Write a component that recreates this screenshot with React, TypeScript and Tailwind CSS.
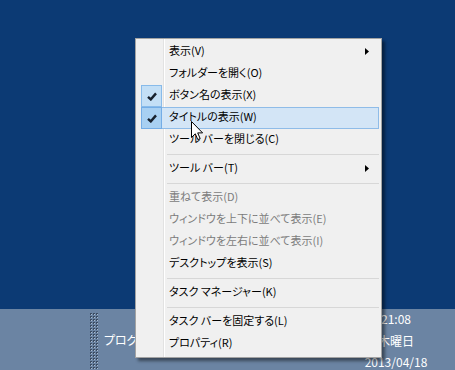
import React from 'react';

type Item =
  | { kind: 'sep' }
  | {
      kind: 'item';
      label: string;
      checked?: boolean;
      hover?: boolean;
      disabled?: boolean;
      submenu?: boolean;
    };

const ITEMS: Item[] = [
  { kind: 'item', label: '表示(V)', submenu: true },
  { kind: 'item', label: 'フォルダーを開く(O)' },
  { kind: 'item', label: 'ボタン名の表示(X)', checked: true },
  { kind: 'item', label: 'タイトルの表示(W)', checked: true, hover: true },
  { kind: 'item', label: 'ツール バーを閉じる(C)' },
  { kind: 'sep' },
  { kind: 'item', label: 'ツール バー(T)', submenu: true },
  { kind: 'sep' },
  { kind: 'item', label: '重ねて表示(D)', disabled: true },
  { kind: 'item', label: 'ウィンドウを上下に並べて表示(E)', disabled: true },
  { kind: 'item', label: 'ウィンドウを左右に並べて表示(I)', disabled: true },
  { kind: 'item', label: 'デスクトップを表示(S)' },
  { kind: 'sep' },
  { kind: 'item', label: 'タスク マネージャー(K)' },
  { kind: 'sep' },
  { kind: 'item', label: 'タスク バーを固定する(L)' },
  { kind: 'item', label: 'プロパティ(R)' },
];

const FONT = "font-['Meiryo_UI','Noto_Sans_CJK_JP',sans-serif] [font-feature-settings:'palt']";

function Check() {
  return (
    <svg width="10" height="9" viewBox="0 0 10 9">
      <path d="M1 4.8 L3.8 7.4 L9 1.4" fill="none" stroke="#17212e" strokeWidth="2.4" />
    </svg>
  );
}

function Arrow() {
  return (
    <svg width="4" height="7" viewBox="0 0 4 7">
      <path d="M0 0 L4 3.5 L0 7 Z" fill="#000" />
    </svg>
  );
}

function MenuRow({ item }: { item: Item }) {
  if (item.kind === 'sep') {
    return (
      <div className="h-[7px] pl-[31px] pr-[2px] pt-[3px]">
        <div className="h-px bg-[#d7d7d7]" />
      </div>
    );
  }
  return (
    <div
      className={
        'ml-[5px] mr-[2px] h-[22px] flex items-center border ' +
        (item.hover ? 'bg-[#d3e5f6] border-[#8fbce8]' : 'border-transparent')
      }
    >
      <div className="w-[21px] h-[22px] -my-px -ml-px flex items-center justify-center">
        {item.checked && (
          <div
            className={
              'w-[22px] h-[22px] flex items-center justify-center border ' +
              (item.hover ? 'bg-[#a8d0f2] border-[#74ade6]' : 'bg-[#c3dff6] border-[#88bbea]')
            }
          >
            <Check />
          </div>
        )}
      </div>
      <span
        className={
          'ml-[7px] flex-1 text-[11px] leading-none -mt-[3px] ' +
          (item.disabled ? 'text-[#7c7c7c]' : 'text-black')
        }
      >
        {item.label}
      </span>
      {item.submenu && (
        <span className="mr-[9px] -mt-[2px] flex">
          <Arrow />
        </span>
      )}
    </div>
  );
}

function Cursor() {
  return (
    <svg className="absolute left-[191px] top-[121px]" width="13" height="21" viewBox="0 0 13 21">
      <path
        d="M0.5 0.5 L0.5 16.5 L4.3 12.8 L6.8 18.6 L9.2 17.6 L6.7 11.9 L11.6 11.9 Z"
        fill="#fff"
        stroke="#000"
        strokeWidth="1"
      />
    </svg>
  );
}

function Gripper() {
  const dots = [];
  for (let r = 0; r < 19; r++) {
    for (let c = 0; c < 3; c++) {
      dots.push(<rect key={`d${r}-${c}`} x={c * 3} y={r * 3} width="2" height="2" fill="#3b4c62" />);
      dots.push(<rect key={`l${r}-${c}`} x={c * 3 + 1} y={r * 3 + 1} width="1" height="1" fill="#a9bbd0" />);
    }
  }
  return (
    <svg width="9" height="57" viewBox="0 0 9 57" className="shrink-0">
      {dots}
    </svg>
  );
}

export default function App() {
  return (
    <div className={`relative w-[455px] h-[370px] overflow-hidden flex flex-col bg-[#0c3a74] ${FONT}`}>
      <div className="flex-1" />
      {/* taskbar */}
      <div className="h-[61px] bg-[#6b84a3] flex items-center">
        <div className="ml-[90px] mt-[3px]">
          <Gripper />
        </div>
        <span className="ml-[5px] text-[12px] text-white">プログラム</span>
        <div className="ml-auto mr-[19px] w-[80px] self-start flex flex-col items-center text-[12px] leading-[21.5px] text-white -mt-px">
          <span>21:08</span>
          <span>木曜日</span>
          <span>2013/04/18</span>
        </div>
      </div>

      {/* context menu */}
      <div className="absolute left-[135px] top-[38px] w-[247px] h-[320px] bg-[#f0f0f0] border border-[#a3a3a3] shadow-[3px_3px_3px_rgba(0,0,0,0.45)] pt-[2px]">
        <div className="absolute left-[27px] top-0 bottom-0 w-px bg-[#e2e2e2]" />
        <div className="absolute left-[28px] top-0 bottom-0 w-px bg-white" />
        <div className="relative">
          {ITEMS.map((it, i) => (
            <MenuRow key={i} item={it} />
          ))}
        </div>
      </div>
      <Cursor />
    </div>
  );
}
